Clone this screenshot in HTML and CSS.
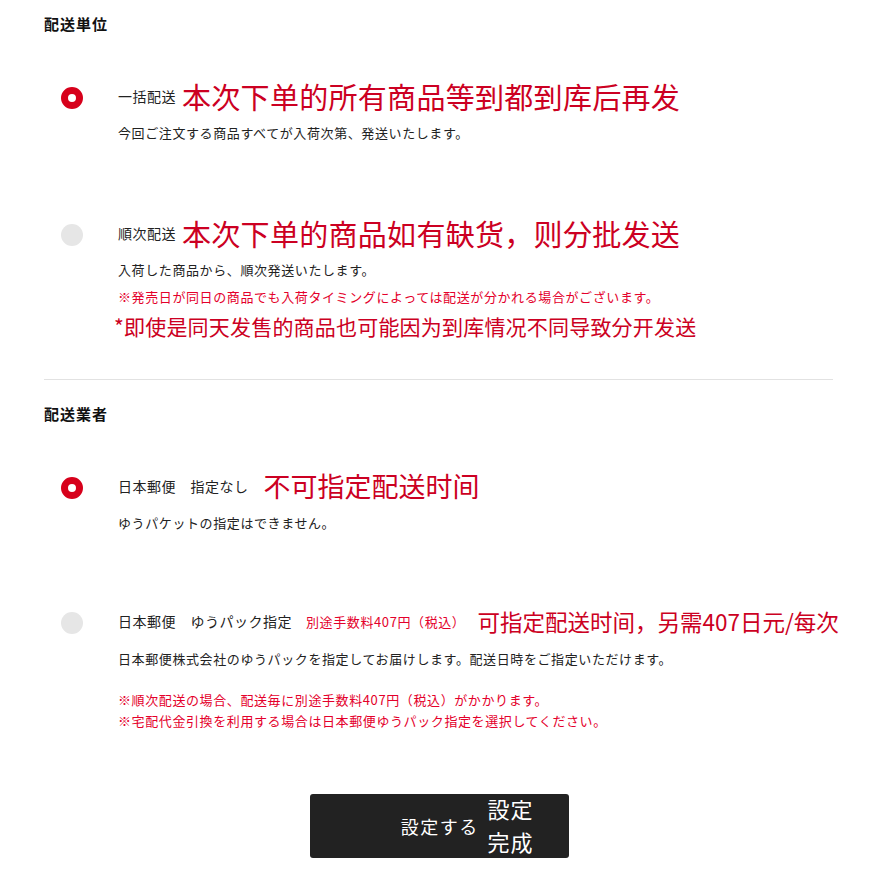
FILE: index.html
```html
<!DOCTYPE html>
<html lang="ja">
<head>
  <meta charset="UTF-8">
  <title>配送設定</title>
  <link rel="stylesheet" href="styles.css">
</head>
<body>
  <section class="group">
    <h2>配送単位</h2>

    <div class="option first">
      <span class="radio checked"></span>
      <div class="body">
        <div class="label">
          <span class="name">一括配送</span>
          <span class="memo memo-lg">本次下单的所有商品等到都到库后再发</span>
        </div>
        <p class="desc">今回ご注文する商品すべてが入荷次第、発送いたします。</p>
      </div>
    </div>

    <div class="option">
      <span class="radio"></span>
      <div class="body">
        <div class="label">
          <span class="name">順次配送</span>
          <span class="memo memo-lg">本次下单的商品如有缺货，则分批发送</span>
        </div>
        <p class="desc">入荷した商品から、順次発送いたします。</p>
        <p class="notice">※発売日が同日の商品でも入荷タイミングによっては配送が分かれる場合がございます。</p>
        <p class="memo memo-sm">*即使是同天发售的商品也可能因为到库情况不同导致分开发送</p>
      </div>
    </div>
  </section>

  <hr class="divider">

  <section class="group">
    <h2 class="second">配送業者</h2>

    <div class="option first">
      <span class="radio checked"></span>
      <div class="body">
        <div class="label">
          <span class="name">日本郵便　指定なし</span>
          <span class="memo memo-md">不可指定配送时间</span>
        </div>
        <p class="desc">ゆうパケットの指定はできません。</p>
      </div>
    </div>

    <div class="option last">
      <span class="radio"></span>
      <div class="body">
        <div class="label">
          <span class="name">日本郵便　ゆうパック指定</span>
          <span class="fee">別途手数料407円（税込）</span>
          <span class="memo memo-fee">可指定配送时间，另需407日元/每次</span>
        </div>
        <p class="desc">日本郵便株式会社のゆうパックを指定してお届けします。配送日時をご指定いただけます。</p>
        <div class="notes">
          <p class="notice">※順次配送の場合、配送毎に別途手数料407円（税込）がかかります。</p>
          <p class="notice">※宅配代金引換を利用する場合は日本郵便ゆうパック指定を選択してください。</p>
        </div>
      </div>
    </div>
  </section>

  <div class="actions">
    <button class="submit" type="button">設定する<span class="memo memo-btn">設定完成</span></button>
  </div>
</body>
</html>
```

FILE: styles.css
```css
body { margin: 0; padding: 0 45px 0 44px; font-family: "Noto Sans CJK JP", "Noto Sans", sans-serif; color: #222; background: #fff; }
p { margin: 0; }

h2 { font-size: 15px; line-height: 22px; font-weight: bold; letter-spacing: 1px; margin: 13px 0 0; color: #111; }
h2.second { margin-top: 23px; }

.option { display: flex; align-items: flex-start; margin: 73px 0 0 17px; }
.option.first { margin-top: 44px; }
.option.last { margin-top: 71px; }

.radio { flex: none; width: 22px; height: 22px; border-radius: 50%; background: #e6e6e6; margin: 8px 35px 0 0; box-sizing: border-box; }
.radio.checked { background: #fff; border: 7.5px solid #d7001b; }

.label { display: flex; align-items: center; height: 34px; white-space: nowrap; }
.name { font-size: 14px; letter-spacing: 0.5px; color: #222; }
.fee { font-size: 13px; letter-spacing: 0.6px; color: #e4002b; margin-left: 14px; }

.memo { font-family: "Noto Sans CJK SC", sans-serif; color: #cc0022; white-space: nowrap; }
.memo-lg { font-size: 29px; line-height: 34px; letter-spacing: 0.3px; margin-left: 6px; }
.memo-md { font-size: 27px; line-height: 34px; margin-left: 15px; }
.memo-fee { font-size: 22.5px; line-height: 34px; margin-left: 12px; }
.memo-sm { font-size: 21px; line-height: 28px; letter-spacing: 0.2px; margin-top: 5px; margin-left: -4px; }

.desc { font-size: 13px; line-height: 20px; letter-spacing: 0.6px; margin-top: 10px; }
.last .desc { margin-top: 11px; }
.desc + .notice { margin-top: 7px; }
.notice { font-size: 13px; line-height: 20px; letter-spacing: 0.6px; color: #e4002b; }
.notes { margin-top: 20px; }
.notes .notice { line-height: 21px; }

.divider { border: 0; border-top: 1px solid #e2e2e2; margin: 39px 0 0; height: 0; }

.actions { display: flex; justify-content: center; margin-top: 63px; padding-left: 1px; }
.submit { position: relative; width: 259px; height: 64px; background: #222; color: #fff; border: 0; border-radius: 3px; font-family: "Noto Sans CJK JP", sans-serif; font-size: 18px; letter-spacing: 1.5px; text-indent: 1.5px; cursor: pointer; }
.memo-btn { position: absolute; left: 178px; top: -2px; width: 48px; color: #fff; font-size: 22px; line-height: 33px; letter-spacing: 1px; white-space: normal; text-align: left; text-indent: 0; }
```
